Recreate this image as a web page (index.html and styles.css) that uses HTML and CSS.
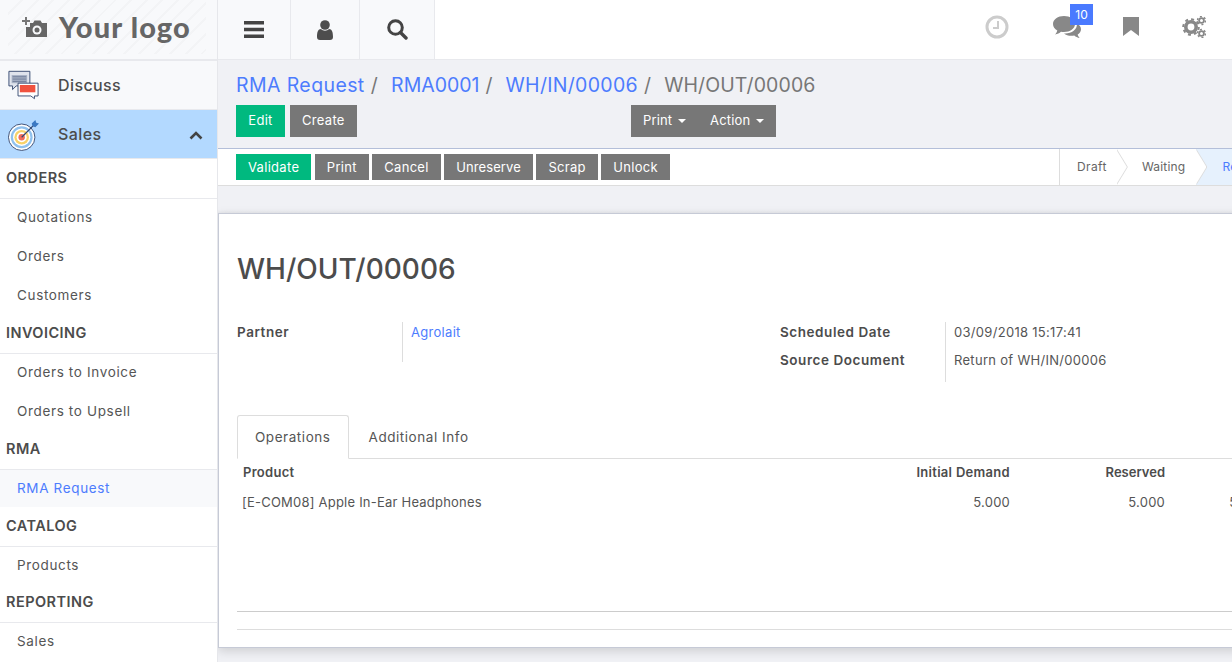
FILE: index.html
```html
<!DOCTYPE html>
<html lang="en">
<head>
    <meta charset="UTF-8">
    <title>WH/OUT/00006</title>
    <link rel="stylesheet" href="styles.css">
</head>
<body>
    <div class="app">
        <aside class="sidebar">
            <div class="logo">
                <div class="logo-box">
                    <svg class="logo-icon" width="26" height="24" viewBox="0 0 26 24">
                        <path d="M0 5h3V2h2v3h3v2H5v3H3V7H0z" fill="#777"/>
                        <path d="M8 8h3l1.500-2.500h6L20 8h5v14H4V12h4z" fill="#666"/>
                        <circle cx="15" cy="15" r="4.500" fill="#f8f9fb"/>
                        <circle cx="15" cy="15" r="2.500" fill="#666"/>
                    </svg>
                    <span class="logo-text">Your logo</span>
                </div>
            </div>
            <a class="app-item">
                <svg class="app-icon" width="31" height="30" viewBox="0 0 34 32">
                    <path d="M1 1h23v16H9l-4 4v-4H1z" fill="#dfe3ec" stroke="#34466e"/>
                    <path d="M4 5h17v9H4z" fill="#a9b3c6"/>
                    <path d="M5 7h15M5 9.500h15M5 12h15" stroke="#6b7894"/>
                    <path d="M11 14h22v14h-4v3l-4-3H11z" fill="#fff" stroke="#34466e"/>
                    <path d="M13 16h17v8H13z" fill="#f0523f"/>
                </svg>
                <span>Discuss</span>
            </a>
            <a class="app-item active">
                <svg class="app-icon" width="31" height="33" viewBox="0 0 34 36">
                    <circle cx="15" cy="21" r="14.500" fill="#fff" stroke="#34466e"/>
                    <circle cx="15" cy="21" r="12" fill="#8fc1ee"/>
                    <circle cx="15" cy="21" r="9.500" fill="#fff"/>
                    <circle cx="15" cy="21" r="8" fill="#f8d26a"/>
                    <circle cx="15" cy="21" r="5.500" fill="#fff"/>
                    <circle cx="15" cy="21" r="3.500" fill="#ef6a5a"/>
                    <path d="M15 21L28 8" stroke="#34466e" stroke-width="1.300"/>
                    <path d="M26 6l4-4 1 3 3 1-4 4-3-1z" fill="#3a78c2"/>
                </svg>
                <span>Sales</span>
                <svg class="chevron" width="14" height="9" viewBox="0 0 14 9"><path d="M1.500 7.500L7 2l5.500 5.500" fill="none" stroke="#444" stroke-width="2.600"/></svg>
            </a>
            <h4 class="menu-head tall">ORDERS</h4>
            <a class="menu-link">Quotations</a>
            <a class="menu-link">Orders</a>
            <a class="menu-link">Customers</a>
            <h4 class="menu-head">INVOICING</h4>
            <a class="menu-link">Orders to Invoice</a>
            <a class="menu-link">Orders to Upsell</a>
            <h4 class="menu-head">RMA</h4>
            <a class="menu-link current">RMA Request</a>
            <h4 class="menu-head tall">CATALOG</h4>
            <a class="menu-link short">Products</a>
            <h4 class="menu-head">REPORTING</h4>
            <a class="menu-link">Sales</a>
        </aside>

        <div class="main">
            <header class="topbar">
                <div class="nav-left">
                    <a class="nav-btn btn-menu">
                        <svg width="20" height="17" viewBox="0 0 20 17"><path d="M0 0h20v3.400H0zM0 6.800h20v3.400H0zM0 13.600h20V17H0z" fill="#444"/></svg>
                    </a>
                    <a class="nav-btn btn-user">
                        <svg width="16" height="20" viewBox="0 0 16 20"><circle cx="8" cy="5" r="4.800" fill="#4d4d4d"/><path d="M0 17c0-5 1-8 4-8 1 1 2.500 1.700 4 1.700S11 10 12 9c3 0 4 3 4 8 0 2-1 3-3 3H3c-2 0-3-1-3-3z" fill="#4d4d4d"/></svg>
                    </a>
                    <a class="nav-btn btn-search">
                        <svg width="21" height="21" viewBox="0 0 21 21"><circle cx="8.500" cy="8.500" r="6.800" fill="none" stroke="#444" stroke-width="3"/><path d="M13.500 13.500l5.500 5.500" stroke="#444" stroke-width="3.400" stroke-linecap="round"/></svg>
                    </a>
                </div>
                <div class="nav-right">
                    <svg class="sys-clock" width="24" height="24" viewBox="0 0 24 24"><circle cx="12" cy="12" r="10" fill="none" stroke="#ccc" stroke-width="3"/><path d="M13 6v7H8" fill="none" stroke="#ccc" stroke-width="2"/></svg>
                    <div class="sys-chat">
                        <svg width="28" height="24" viewBox="0 0 28 24">
                            <path d="M11 1c6 0 11 3.500 11 8s-5 8-11 8c-1 0-2 0-3-.3C6.500 18 4.500 19 2 19.500c1-1 2-2.500 2.300-4C1.700 14 0 11.700 0 9c0-4.500 5-8 11-8z" fill="#888"/>
                            <path d="M24 8.500c2.500 1.400 4 3.500 4 5.800 0 2.200-1.300 4-3.300 5.300.2 1.300 1 2.500 2 3.400-2.200-.3-4-1.200-5.400-2.500-1 .2-2 .3-3 .3-3 0-5.500-.8-7.300-2.300 7 .5 13.500-3.500 12.900-10z" fill="#888"/>
                        </svg>
                        <span class="badge">10</span>
                    </div>
                    <svg class="sys-mark" width="16" height="19" viewBox="0 0 16 19"><path d="M0 0h16v19l-8-6-8 6z" fill="#888"/></svg>
                    <svg class="sys-gears" width="24" height="22" viewBox="0 0 24 22">
                        <circle cx="9" cy="11" r="5.200" fill="none" stroke="#888" stroke-width="3.600"/>
                        <circle cx="9" cy="11" r="7.800" fill="none" stroke="#888" stroke-width="2" stroke-dasharray="3 3.100"/>
                        <circle cx="19.500" cy="4.500" r="2.400" fill="none" stroke="#888" stroke-width="1.800"/>
                        <circle cx="19.500" cy="4.500" r="4" fill="none" stroke="#888" stroke-width="1.400" stroke-dasharray="2 2.200"/>
                        <circle cx="19.500" cy="17.500" r="2.400" fill="none" stroke="#888" stroke-width="1.800"/>
                        <circle cx="19.500" cy="17.500" r="4" fill="none" stroke="#888" stroke-width="1.400" stroke-dasharray="2 2.200"/>
                    </svg>
                </div>
            </header>

            <section class="control">
                <ol class="breadcrumb">
                    <li><a>RMA Request</a><i>/</i></li>
                    <li class="crumb-rma"><a>RMA0001</a><i>/</i></li>
                    <li class="crumb-in"><a>WH/IN/00006</a><i>/</i></li>
                    <li class="last">WH/OUT/00006</li>
                </ol>
                <div class="control-btns">
                    <div class="left-btns">
                        <button class="btn btn-primary">Edit</button>
                        <button class="btn">Create</button>
                    </div>
                    <div class="side-btns">
                        <button class="btn">Print <b class="caret"></b></button>
                        <button class="btn">Action <b class="caret"></b></button>
                    </div>
                </div>
            </section>

            <section class="statusbar">
                <div class="status-btns">
                    <button class="btn btn-primary">Validate</button>
                    <button class="btn">Print</button>
                    <button class="btn">Cancel</button>
                    <button class="btn btn-narrow">Unreserve</button>
                    <button class="btn">Scrap</button>
                    <button class="btn">Unlock</button>
                </div>
                <div class="steps">
                    <span class="step draft">Draft</span>
                    <span class="step waiting">Waiting</span>
                    <span class="step on">Ready</span>
                </div>
            </section>

            <section class="sheet-wrap">
                <div class="sheet">
                    <h1>WH/OUT/00006</h1>
                    <div class="fields">
                        <div class="field partner">
                            <label>Partner</label>
                            <div class="values"><a>Agrolait</a></div>
                        </div>
                        <div class="field dates">
                            <div class="labels">
                                <label>Scheduled Date</label>
                                <label>Source Document</label>
                            </div>
                            <div class="values">
                                <span>03/09/2018 15:17:41</span>
                                <span>Return of WH/IN/00006</span>
                            </div>
                        </div>
                    </div>
                    <ul class="tabs">
                        <li class="active">Operations</li>
                        <li>Additional Info</li>
                    </ul>
                    <div class="grid-row grid-head">
                        <span>Product</span><span>Initial Demand</span><span class="col-reserved">Reserved</span><span>Done</span>
                    </div>
                    <div class="grid-row">
                        <span>[E-COM08] Apple In-Ear Headphones</span><span>5.000</span><span>5.000</span><span>5.000</span>
                    </div>
                    <div class="grid-foot"></div>
                </div>
            </section>
        </div>
    </div>
</body>
</html>
```

FILE: styles.css
```css
html, body {
    height: 100%;
}
body {
    margin: 0;
    overflow: hidden;
    font-family: Inter, "Open Sans", sans-serif;
    font-size: 13px;
    color: #555;
    background-color: #f0f1f5;
}
.app {
    display: flex;
    width: 1232px;
    height: 662px;
    overflow: hidden;
}
a {
    color: inherit;
    text-decoration: none;
}

/* sidebar */
.sidebar {
    flex: 0 0 218px;
    box-sizing: border-box;
    background-color: #fff;
    border-right: 1px solid #e6e7eb;
    height: 662px;
    overflow: hidden;
}
.logo {
    height: 59px;
    background-color: #f8f9fb;
    border-bottom: 2px solid #e8e9ed;
    padding-left: 8px;
}
.logo-box {
    display: flex;
    align-items: center;
    gap: 11px;
    height: 54px;
    padding-left: 14px;
    width: 198px;
    box-sizing: border-box;
    background: repeating-linear-gradient(135deg, #f8f9fb 0, #f8f9fb 9px, #f3f4f6 9px, #f3f4f6 11px);
}
.logo-text {
    font-family: Lato, sans-serif;
    font-weight: 900;
    font-size: 29px;
    color: #666;
    letter-spacing: 1.100px;
    padding-bottom: 2px;
}
.app-item {
    display: flex;
    align-items: center;
    height: 48px;
    padding-left: 8px;
    background-color: #f8f9fb;
    border-bottom: 1px solid #e8e9ed;
    font-size: 16px;
    font-weight: 500;
    letter-spacing: .4px;
    color: #4c4c4c;
    position: relative;
}
.app-item span {
    position: absolute;
    left: 58px;
}
.app-item.active {
    background-color: #b3d9ff;
}
.chevron {
    position: absolute;
    right: 14px;
    top: 21px;
}
.menu-head {
    margin: 0;
    height: 37px;
    line-height: 34px;
    padding-left: 6px;
    font-size: 14.500px;
    font-weight: 600;
    letter-spacing: .45px;
    color: #4c4c4c;
    border-bottom: 1px solid #e8e9ed;
}
.menu-head.tall {
    height: 39px;
    line-height: 38px;
}
.menu-link {
    display: block;
    height: 39px;
    line-height: 37px;
    padding-left: 17px;
    font-size: 13.500px;
    letter-spacing: .65px;
    color: #555;
}
.menu-link.short {
    height: 38px;
}
.menu-link.current {
    height: 37px;
    color: #4d7cfe;
    background-color: #f8f9fb;
}

/* top bar */
.main {
    flex: 0 0 1014px;
    width: 1014px;
    overflow: hidden;
}
.topbar {
    display: flex;
    justify-content: space-between;
    height: 59px;
    background-color: #fff;
    border-bottom: 1px solid #e8e9ed;
}
.nav-left {
    display: flex;
}
.nav-btn {
    display: flex;
    align-items: center;
    justify-content: center;
    height: 59px;
    background-color: #f8f9fb;
    border-right: 1px solid #e8e9ed;
}
.btn-menu { width: 72px; }
.btn-user { width: 68px; }
.btn-search { width: 74px; }
.nav-right {
    display: flex;
    align-items: center;
    padding: 0 26px 6px 0;
}
.sys-chat {
    position: relative;
    margin-left: 44px;
    display: flex;
}
.badge {
    position: absolute;
    left: 17px;
    top: -11px;
    width: 23px;
    height: 21px;
    line-height: 21px;
    text-align: center;
    background-color: #4a7aff;
    color: #fff;
    font-size: 12px;
}
.sys-mark {
    margin-left: 42px;
}
.sys-gears {
    margin-left: 43px;
}

/* control panel */
.control {
    height: 88px;
    background-color: #f0f1f5;
    border-bottom: 1px solid #b4bfd9;
    padding-left: 18px;
}
.breadcrumb {
    display: flex;
    margin: 0;
    padding: 12px 0 0 0;
    list-style: none;
    height: 33px;
    font-size: 19.500px;
    line-height: 26px;
    letter-spacing: .4px;
    color: #777;
}
.breadcrumb a {
    color: #4d7cfe;
}
.breadcrumb i {
    font-style: normal;
    margin: 0 13px 0 6px;
}
.breadcrumb .crumb-rma {
    letter-spacing: 0;
}
.breadcrumb .crumb-in {
    letter-spacing: .3px;
}
.breadcrumb .last {
    letter-spacing: .1px;
}
.control-btns {
    display: flex;
}
.left-btns {
    display: flex;
    gap: 5px;
    width: 395px;
}
.side-btns {
    display: flex;
}
.side-btns .btn {
    letter-spacing: .15px;
}
.btn {
    font-family: inherit;
    font-size: 13px;
    letter-spacing: .3px;
    color: #fff;
    background-color: #777;
    border: none;
    border-radius: 0;
    height: 32px;
    padding: 0 12px 2px;
}
.btn-primary {
    background-color: #00b97f;
}
.left-btns .btn-primary {
    width: 49px;
    padding: 0 0 2px;
}
.caret {
    display: inline-block;
    width: 0;
    height: 0;
    margin-left: 2px;
    vertical-align: middle;
    border-top: 4px solid #fff;
    border-left: 4px solid transparent;
    border-right: 4px solid transparent;
}

/* status bar */
.statusbar {
    display: flex;
    justify-content: space-between;
    height: 36px;
    background-color: #fff;
    border-bottom: 1px solid #ddd;
    padding-left: 18px;
}
.status-btns {
    display: flex;
    align-items: flex-start;
    gap: 3.500px;
    padding-top: 5px;
}
.status-btns .btn {
    height: 26px;
    padding-bottom: 0;
}
.status-btns .btn-narrow {
    letter-spacing: .1px;
}
.steps {
    display: flex;
    flex: 0 0 172px;
    border-left: 1px solid #ddd;
    overflow: hidden;
}
.step {
    flex: none;
    display: block;
    position: relative;
    height: 36px;
    line-height: 36px;
    font-size: 12px;
    letter-spacing: .4px;
    color: #666;
}
.step.draft {
    padding: 0 10px 0 17px;
}
.step.waiting {
    padding: 0 11px 0 25px;
    letter-spacing: .2px;
}
.step.draft::before, .step.draft::after,
.step.waiting::before, .step.waiting::after {
    content: "";
    position: absolute;
    z-index: 2;
    top: 0;
    left: 100%;
    width: 11px;
    height: 36px;
    background-color: #ddd;
    clip-path: polygon(0 0, 100% 50%, 0 100%);
}
.step.draft::after, .step.waiting::after {
    z-index: 3;
    margin-left: -1px;
    background-color: #fff;
}
.step.on {
    padding-left: 26px;
    color: #4d7cfe;
    background-color: #e6f1fd;
}

/* form sheet */
.sheet-wrap {
    height: 476px;
    padding-top: 27px;
    box-sizing: border-box;
    background: linear-gradient(#f0f1f5 24px, #e9eaee 27px, #f0f1f5 27px);
}
.sheet {
    box-sizing: border-box;
    width: 1100px;
    height: 435px;
    padding: 37px 0 0 18px;
    background-color: #fff;
    border: 1px solid #c6cad6;
    border-right: none;
    box-shadow: 0 3px 10px rgba(0, 0, 0, .15);
}
.sheet h1 {
    margin: 0;
    height: 36px;
    line-height: 36px;
    font-size: 28px;
    font-weight: 500;
    color: #4c4c4c;
}
.fields {
    display: flex;
    margin-top: 35px;
    height: 60px;
}
.field {
    display: flex;
}
.field label {
    display: block;
    font-size: 13.500px;
    font-weight: 600;
    letter-spacing: .55px;
    color: #4c4c4c;
    line-height: 21px;
}
.partner {
    width: 543px;
}
.partner label {
    width: 165px;
}
.partner .values {
    height: 40px;
    border-left: 1px solid #ddd;
    padding-left: 8px;
    line-height: 21px;
    letter-spacing: .3px;
    color: #4d7cfe;
}
.dates .labels {
    width: 165px;
}
.dates label {
    height: 28px;
}
.dates .values {
    height: 60px;
    border-left: 1px solid #ddd;
    padding-left: 8px;
    letter-spacing: .3px;
}
.dates span {
    display: block;
    height: 28px;
    line-height: 21px;
}
.tabs {
    display: flex;
    list-style: none;
    margin: 33px 0 0;
    padding: 0;
    height: 43px;
    border-bottom: 1px solid #ddd;
}
.tabs li {
    box-sizing: border-box;
    height: 44px;
    line-height: 44px;
    padding: 0 20px;
    font-size: 13.500px;
    letter-spacing: .55px;
    color: #555;
}
.tabs li.active {
    padding: 0 17px;
    background-color: #fff;
    border: 1px solid #ddd;
    border-bottom-color: #fff;
    border-radius: 3px 3px 0 0;
    line-height: 42px;
}
.grid-row {
    display: grid;
    grid-template-columns: 601px 167px 155px 101px;
    padding-left: 5px;
    height: 32px;
    line-height: 33px;
    letter-spacing: .22px;
}
.grid-row span:not(:first-child) {
    text-align: right;
}
.grid-head {
    height: 27px;
    line-height: 27px;
    font-weight: 600;
    letter-spacing: .3px;
    color: #4c4c4c;
}
.grid-head span:first-child {
    padding-left: 1px;
}
.grid-head .col-reserved {
    letter-spacing: 0;
}
.grid-foot {
    margin-top: 93px;
    height: 17px;
    border-top: 1px solid #ccc;
    border-bottom: 1px solid #ddd;
}
```
